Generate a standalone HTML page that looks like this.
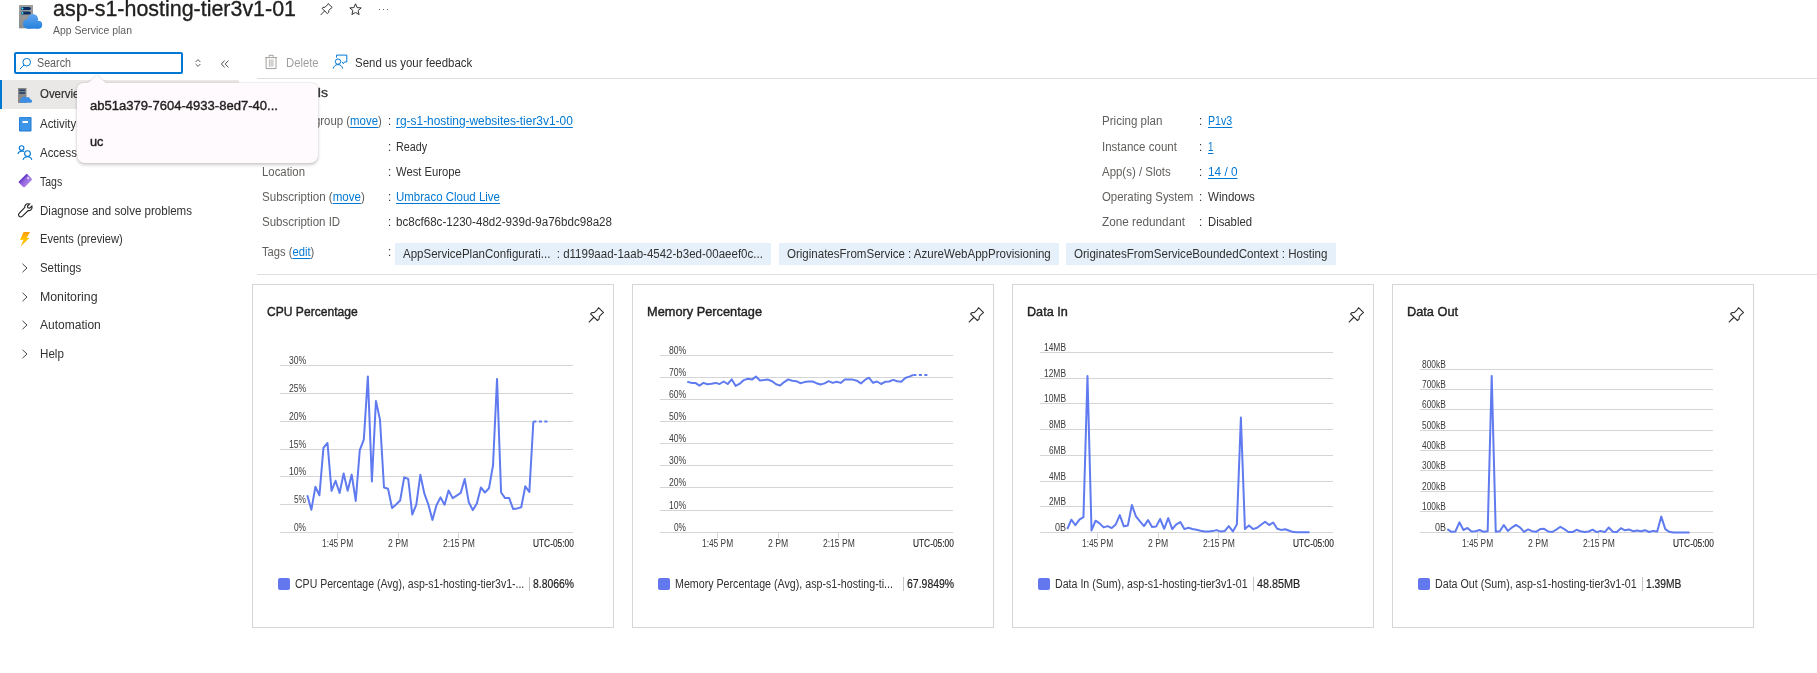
<!DOCTYPE html>
<html><head><meta charset="utf-8"><style>
html,body{margin:0;padding:0;background:#fff;}
body{width:1817px;height:673px;overflow:hidden;position:relative;font-family:"Liberation Sans", sans-serif;}
.t{position:absolute;white-space:nowrap;line-height:1;transform-origin:0 0;}
u{text-decoration:underline;text-underline-offset:2px;}
svg{overflow:visible}
</style></head><body>
<svg style="position:absolute;left:19px;top:5px" width="24" height="24" viewBox="0 0 24 24">
<defs><linearGradient id="sg" x1="0" y1="0" x2="0" y2="1"><stop offset="0" stop-color="#a0a0a0"/><stop offset="1" stop-color="#8c8c8c"/></linearGradient>
<linearGradient id="cg" gradientUnits="userSpaceOnUse" x1="0" y1="9" x2="0" y2="24"><stop offset="0" stop-color="#63a5f0"/><stop offset="1" stop-color="#2381dd"/></linearGradient></defs>
<rect x="0" y="0" width="14" height="23.3" fill="url(#sg)"/>
<rect x="1.8" y="1.9" width="10" height="3.1" rx="1.5" fill="#0b2d62"/><rect x="1.8" y="6.4" width="10" height="3.1" rx="1.5" fill="#0b2d62"/>
<circle cx="3.4" cy="3.45" r="1" fill="#50e6ff"/><circle cx="3.4" cy="7.95" r="1" fill="#50e6ff"/>
<g fill="url(#cg)"><circle cx="13.8" cy="14.3" r="5.3"/><circle cx="8.8" cy="18.9" r="4.8"/><circle cx="19.2" cy="19.7" r="4"/><rect x="8.8" y="16" width="10.4" height="7.7"/></g>
</svg>
<div class="t" style="left:53.00px;top:-2.00px;font-size:22px;color:#201f1e;font-weight:400;transform:scaleX(0.9741);-webkit-text-stroke:0.35px currentColor;">asp-s1-hosting-tier3v1-01</div>
<div class="t" style="left:53.00px;top:25.00px;font-size:11.5px;color:#605e5c;font-weight:400;transform:scaleX(0.9085);">App Service plan</div>
<svg style="position:absolute;left:320px;top:3px" width="12.5" height="12.5" viewBox="0 0 16 16" fill="none" stroke="#323130" stroke-width="1.25" stroke-linejoin="round">
<path d="M10.5 0.7 L15.6 5.6 L14.4 6.4 L11.4 9.4 L11.1 12.1 L9.4 13.5 L2.6 6.9 L3.8 5.6 L6.5 5.4 L9.6 2.3 Z"/><path d="M6.1 10 L0.8 15.3"/></svg>
<svg style="position:absolute;left:349px;top:3px" width="13" height="13" viewBox="0 0 13 13" fill="none" stroke="#323130" stroke-width="1">
<path d="M6.5 0.8 L8.1 4.6 L12.2 4.9 L9.1 7.5 L10.1 11.6 L6.5 9.4 L2.9 11.6 L3.9 7.5 L0.8 4.9 L4.9 4.6 Z"/></svg>
<div style="position:absolute;left:378.5px;top:9px;width:1.3px;height:1.3px;background:#323130;border-radius:1px"></div>
<div style="position:absolute;left:382.5px;top:9px;width:1.3px;height:1.3px;background:#323130;border-radius:1px"></div>
<div style="position:absolute;left:386.5px;top:9px;width:1.3px;height:1.3px;background:#323130;border-radius:1px"></div>
<div style="position:absolute;left:14px;top:52px;width:165px;height:18px;border:2px solid #0078d4;border-radius:2px"></div>
<svg style="position:absolute;left:19px;top:57px" width="13" height="13" viewBox="0 0 13 13" fill="none" stroke="#0078d4" stroke-width="1">
<circle cx="7.7" cy="5.2" r="3.8"/><path d="M5 8 L1 12"/></svg>
<div class="t" style="left:37.00px;top:57.00px;font-size:12.5px;color:#605e5c;font-weight:400;transform:scaleX(0.8584);">Search</div>
<svg style="position:absolute;left:194.5px;top:58.5px" width="6" height="8" viewBox="0 0 6 8" fill="none" stroke="#484644" stroke-width="0.9">
<path d="M0.6 3 L3 0.6 L5.4 3"/><path d="M0.6 5 L3 7.4 L5.4 5"/></svg>
<svg style="position:absolute;left:220.5px;top:59.5px" width="8" height="8" viewBox="0 0 8 8" fill="none" stroke="#484644" stroke-width="0.95">
<path d="M3.7 0.5 L0.4 4 L3.7 7.5"/><path d="M7.5 0.5 L4.2 4 L7.5 7.5"/></svg>
<div style="position:absolute;left:0px;top:80px;width:239px;height:29px;background:#e9e8e7;"></div>
<div style="position:absolute;left:0px;top:80px;width:2px;height:29px;background:#0078d4;"></div>
<div class="t" style="left:40.00px;top:88.00px;font-size:12.5px;color:#323130;font-weight:400;transform:scaleX(0.9152);-webkit-text-stroke:0.2px currentColor;">Overview</div>
<div class="t" style="left:40.00px;top:118.00px;font-size:12.5px;color:#323130;font-weight:400;transform:scaleX(0.9152);">Activity log</div>
<div class="t" style="left:40.00px;top:147.00px;font-size:12.5px;color:#323130;font-weight:400;transform:scaleX(0.9152);">Access control (IAM)</div>
<div class="t" style="left:40.00px;top:176.00px;font-size:12.5px;color:#323130;font-weight:400;transform:scaleX(0.8407);">Tags</div>
<div class="t" style="left:40.00px;top:205.00px;font-size:12.5px;color:#323130;font-weight:400;transform:scaleX(0.9230);">Diagnose and solve problems</div>
<div class="t" style="left:40.00px;top:233.00px;font-size:12.5px;color:#323130;font-weight:400;transform:scaleX(0.8873);">Events (preview)</div>
<div class="t" style="left:40.00px;top:262.00px;font-size:12.5px;color:#323130;font-weight:400;transform:scaleX(0.9121);">Settings</div>
<div class="t" style="left:40.00px;top:291.00px;font-size:12.5px;color:#323130;font-weight:400;transform:scaleX(0.9850);">Monitoring</div>
<div class="t" style="left:40.00px;top:319.00px;font-size:12.5px;color:#323130;font-weight:400;transform:scaleX(0.9615);">Automation</div>
<div class="t" style="left:40.00px;top:348.00px;font-size:12.5px;color:#323130;font-weight:400;transform:scaleX(0.9293);">Help</div>
<svg style="position:absolute;left:18px;top:88px" width="15" height="15" viewBox="0 0 15 15">
<rect x="0" y="0" width="8.5" height="15" fill="#8a8886"/><rect x="1.2" y="1.5" width="6" height="1.6" fill="#1b3e6b"/><rect x="1.2" y="4.2" width="6" height="1.6" fill="#1b3e6b"/>
<path d="M3.5 14.8 C1.2 14.8 1 11.2 3.3 11 C3.6 8.3 7 7.6 8.3 9.6 C9.6 8.3 12 9 12 11.2 C14.8 11.2 14.8 14.8 12.3 14.8 Z" fill="#3b8ee3"/></svg>
<svg style="position:absolute;left:19px;top:117px" width="13" height="15" viewBox="0 0 13 15">
<rect x="0" y="0" width="12.5" height="14.5" rx="1.2" fill="#1f7ad6"/><rect x="0.8" y="0.6" width="10.8" height="13" rx="1" fill="#3c95e6"/><rect x="3.5" y="4" width="5.5" height="2" fill="#fff"/></svg>
<svg style="position:absolute;left:17px;top:145px" width="16" height="16" viewBox="0 0 16 16" fill="none" stroke="#0078d4" stroke-width="1.1">
<circle cx="4.6" cy="3.1" r="2.3"/><path d="M0.9 8.8 C1.4 7.2 2.8 6.1 5.0 6.0 C5.8 6.0 6.4 6.2 7 6.5"/><circle cx="10.5" cy="8.6" r="2.9"/><path d="M6 14.8 C6.6 12.7 8.4 11.7 10.5 11.7 C12.6 11.7 14.4 12.7 14.8 14.8"/></svg>
<svg style="position:absolute;left:0;top:0" width="40" height="200" viewBox="0 0 40 200">
<defs><linearGradient id="tg" x1="0" y1="0" x2="0.3" y2="1"><stop offset="0" stop-color="#7a48d8"/><stop offset="1" stop-color="#a982e6"/></linearGradient></defs>
<g transform="translate(25.4 180.8) rotate(-45)"><rect x="-6" y="-4" width="12" height="8" rx="1.2" fill="url(#tg)"/><rect x="-6" y="-4" width="12" height="1.6" rx="0.8" fill="#6a3fc9"/><circle cx="3.8" cy="0" r="1" fill="#fff" opacity="0.85"/></g></svg>
<svg style="position:absolute;left:17.5px;top:202.5px" width="15" height="15" viewBox="0 0 16 16" fill="none" stroke="#201f1e" stroke-width="1.2">
<path d="M10.5 0.8 C8.5 0.8 7 2.5 7.3 4.6 L1.2 11 C0.3 11.9 0.4 13.3 1.3 14.2 C2.2 15.1 3.6 15.1 4.5 14.2 L10.8 8 C13 8.4 15 6.8 15 4.6 C15 4.1 14.9 3.7 14.8 3.3 L12.5 5.5 L10.5 5.2 L10.2 3.2 L12.5 1 C11.9 0.9 11.2 0.8 10.5 0.8 Z"/></svg>
<svg style="position:absolute;left:20px;top:231.5px" width="11" height="15" viewBox="0 0 11 15">
<defs><linearGradient id="lg" x1="0" y1="0" x2="0" y2="1"><stop offset="0" stop-color="#ff9a00"/><stop offset="0.5" stop-color="#ffc400"/><stop offset="1" stop-color="#ffb000"/></linearGradient></defs>
<path d="M3.6 0 L10 0 L6.6 6 L9.6 5.8 L0.6 14.6 L3.6 7.8 L0 8 Z" fill="url(#lg)"/></svg>
<svg style="position:absolute;left:21px;top:263px" width="8" height="10" viewBox="0 0 8 10" fill="none" stroke="#323130" stroke-width="0.9">
<path d="M1.5 0.8 L6 5 L1.5 9.2"/></svg>
<svg style="position:absolute;left:21px;top:292px" width="8" height="10" viewBox="0 0 8 10" fill="none" stroke="#323130" stroke-width="0.9">
<path d="M1.5 0.8 L6 5 L1.5 9.2"/></svg>
<svg style="position:absolute;left:21px;top:320px" width="8" height="10" viewBox="0 0 8 10" fill="none" stroke="#323130" stroke-width="0.9">
<path d="M1.5 0.8 L6 5 L1.5 9.2"/></svg>
<svg style="position:absolute;left:21px;top:349px" width="8" height="10" viewBox="0 0 8 10" fill="none" stroke="#323130" stroke-width="0.9">
<path d="M1.5 0.8 L6 5 L1.5 9.2"/></svg>
<svg style="position:absolute;left:265px;top:54px" width="12" height="15" viewBox="0 0 12 15" fill="none" stroke="#a19f9d" stroke-width="1">
<path d="M4.1 2.8 L4.1 1.3 L8.2 1.3 L8.2 2.8"/><path d="M0.2 3.6 L12 3.6"/><path d="M1.1 3.6 L1.1 14.6 L11 14.6 L11 3.6"/><path d="M4.4 5.4 V12.7 M6.15 5.4 V12.7 M7.9 5.4 V12.7" stroke-width="0.8"/></svg>
<div class="t" style="left:286.00px;top:57.00px;font-size:12.5px;color:#a19f9d;font-weight:400;transform:scaleX(0.9020);">Delete</div>
<svg style="position:absolute;left:332px;top:54px" width="16" height="16" viewBox="0 0 16 16" fill="none" stroke="#0078d4" stroke-width="1">
<path d="M4.5 3.6 L4.5 1.1 L14.8 1.1 L14.8 7.9 L12.6 7.9 L11.3 9.7 L10.3 7.9"/><circle cx="6" cy="7.6" r="2.7"/><path d="M1.2 14.6 C1.8 11.8 3.8 10.6 6 10.6 C8.2 10.6 10.2 11.8 10.6 14.6"/></svg>
<div class="t" style="left:354.50px;top:57.00px;font-size:12.5px;color:#323130;font-weight:400;transform:scaleX(0.9173);">Send us your feedback</div>
<div style="position:absolute;left:257px;top:78px;width:1560px;height:1px;background:#e1dfdd;"></div>
<div class="t" style="left:264.00px;top:87.00px;font-size:12.5px;color:#323130;font-weight:400;transform:scaleX(1.1231);-webkit-text-stroke:0.3px currentColor;">Essentials</div>
<div class="t" style="left:261.50px;top:115.00px;font-size:12.5px;color:#605e5c;font-weight:400;transform:scaleX(0.9122);">Resource group (<u style="color:#0078d4">move</u>)</div>
<div class="t" style="left:388.00px;top:115.00px;font-size:12.5px;color:#323130;font-weight:400;transform:scaleX(0.9152);">:</div>
<div class="t" style="left:396.00px;top:115.00px;font-size:12.5px;color:#0078d4;font-weight:400;transform:scaleX(0.9531);"><u>rg-s1-hosting-websites-tier3v1-00</u></div>
<div class="t" style="left:261.50px;top:141.00px;font-size:12.5px;color:#605e5c;font-weight:400;transform:scaleX(0.9152);">Status</div>
<div class="t" style="left:388.00px;top:141.00px;font-size:12.5px;color:#323130;font-weight:400;transform:scaleX(0.9152);">:</div>
<div class="t" style="left:396.00px;top:141.00px;font-size:12.5px;color:#323130;font-weight:400;transform:scaleX(0.8633);">Ready</div>
<div class="t" style="left:261.50px;top:166.00px;font-size:12.5px;color:#605e5c;font-weight:400;transform:scaleX(0.9098);">Location</div>
<div class="t" style="left:388.00px;top:166.00px;font-size:12.5px;color:#323130;font-weight:400;transform:scaleX(0.9152);">:</div>
<div class="t" style="left:396.00px;top:166.00px;font-size:12.5px;color:#323130;font-weight:400;transform:scaleX(0.8996);">West Europe</div>
<div class="t" style="left:261.50px;top:191.00px;font-size:12.5px;color:#605e5c;font-weight:400;transform:scaleX(0.9246);">Subscription (<u style="color:#0078d4">move</u>)</div>
<div class="t" style="left:388.00px;top:191.00px;font-size:12.5px;color:#323130;font-weight:400;transform:scaleX(0.9152);">:</div>
<div class="t" style="left:396.00px;top:191.00px;font-size:12.5px;color:#0078d4;font-weight:400;transform:scaleX(0.9183);"><u>Umbraco Cloud Live</u></div>
<div class="t" style="left:261.50px;top:216.00px;font-size:12.5px;color:#605e5c;font-weight:400;transform:scaleX(0.9225);">Subscription ID</div>
<div class="t" style="left:388.00px;top:216.00px;font-size:12.5px;color:#323130;font-weight:400;transform:scaleX(0.9152);">:</div>
<div class="t" style="left:396.00px;top:216.00px;font-size:12.5px;color:#323130;font-weight:400;transform:scaleX(0.9277);">bc8cf68c-1230-48d2-939d-9a76bdc98a28</div>
<div class="t" style="left:1102.00px;top:115.00px;font-size:12.5px;color:#605e5c;font-weight:400;transform:scaleX(0.9246);">Pricing plan</div>
<div class="t" style="left:1199.00px;top:115.00px;font-size:12.5px;color:#323130;font-weight:400;transform:scaleX(0.9152);">:</div>
<div class="t" style="left:1208.00px;top:115.00px;font-size:12.5px;color:#0078d4;font-weight:400;transform:scaleX(0.8526);"><u>P1v3</u></div>
<div class="t" style="left:1102.00px;top:141.00px;font-size:12.5px;color:#605e5c;font-weight:400;transform:scaleX(0.9211);">Instance count</div>
<div class="t" style="left:1199.00px;top:141.00px;font-size:12.5px;color:#323130;font-weight:400;transform:scaleX(0.9152);">:</div>
<div class="t" style="left:1208.00px;top:141.00px;font-size:12.5px;color:#0078d4;font-weight:400;transform:scaleX(0.7766);"><u>1</u></div>
<div class="t" style="left:1102.00px;top:166.00px;font-size:12.5px;color:#605e5c;font-weight:400;transform:scaleX(0.9156);">App(s) / Slots</div>
<div class="t" style="left:1199.00px;top:166.00px;font-size:12.5px;color:#323130;font-weight:400;transform:scaleX(0.9152);">:</div>
<div class="t" style="left:1208.00px;top:166.00px;font-size:12.5px;color:#0078d4;font-weight:400;transform:scaleX(0.9431);"><u>14 / 0</u></div>
<div class="t" style="left:1102.00px;top:191.00px;font-size:12.5px;color:#605e5c;font-weight:400;transform:scaleX(0.9126);">Operating System</div>
<div class="t" style="left:1199.00px;top:191.00px;font-size:12.5px;color:#323130;font-weight:400;transform:scaleX(0.9152);">:</div>
<div class="t" style="left:1208.00px;top:191.00px;font-size:12.5px;color:#323130;font-weight:400;transform:scaleX(0.9247);">Windows</div>
<div class="t" style="left:1102.00px;top:216.00px;font-size:12.5px;color:#605e5c;font-weight:400;transform:scaleX(0.9403);">Zone redundant</div>
<div class="t" style="left:1199.00px;top:216.00px;font-size:12.5px;color:#323130;font-weight:400;transform:scaleX(0.9152);">:</div>
<div class="t" style="left:1208.00px;top:216.00px;font-size:12.5px;color:#323130;font-weight:400;transform:scaleX(0.9046);">Disabled</div>
<div class="t" style="left:261.50px;top:246.00px;font-size:12.5px;color:#605e5c;font-weight:400;transform:scaleX(0.8959);">Tags (<u style="color:#0078d4">edit</u>)</div>
<div class="t" style="left:388.00px;top:246.00px;font-size:12.5px;color:#323130;font-weight:400;transform:scaleX(0.9152);">:</div>
<div style="position:absolute;left:395px;top:243px;width:376px;height:22px;background:#e5f0fa;"></div>
<div class="t" style="left:403.00px;top:248.00px;font-size:12.5px;color:#323130;font-weight:400;transform:scaleX(0.9220);">AppServicePlanConfigurati...&nbsp; : d1199aad-1aab-4542-b3ed-00aeef0c...</div>
<div style="position:absolute;left:779px;top:243px;width:280px;height:22px;background:#e5f0fa;"></div>
<div class="t" style="left:787.00px;top:248.00px;font-size:12.5px;color:#323130;font-weight:400;transform:scaleX(0.9223);">OriginatesFromService : AzureWebAppProvisioning</div>
<div style="position:absolute;left:1066px;top:243px;width:270px;height:22px;background:#e5f0fa;"></div>
<div class="t" style="left:1074.00px;top:248.00px;font-size:12.5px;color:#323130;font-weight:400;transform:scaleX(0.9257);">OriginatesFromServiceBoundedContext : Hosting</div>
<div style="position:absolute;left:257px;top:274px;width:1560px;height:1px;background:#e1dfdd;"></div>
<div style="position:absolute;left:252px;top:284px;width:360px;height:342px;border:1px solid #d6d6d6"></div>
<div class="t" style="left:267.10px;top:306.00px;font-size:12.5px;color:#201f1e;font-weight:400;transform:scaleX(0.9668);-webkit-text-stroke:0.4px currentColor;">CPU Percentage</div>
<svg style="position:absolute;left:588px;top:307px" width="16" height="16" viewBox="0 0 16 16" fill="none" stroke="#323130" stroke-width="1.1" stroke-linejoin="round">
<path d="M10.5 0.7 L15.6 5.6 L14.4 6.4 L11.4 9.4 L11.1 12.1 L9.4 13.5 L2.6 6.9 L3.8 5.6 L6.5 5.4 L9.6 2.3 Z"/><path d="M6.1 10 L0.8 15.3"/></svg>
<div style="position:absolute;left:280px;top:365px;width:293px;height:1px;background:#d5d5d5;"></div>
<div style="position:absolute;left:280px;top:393px;width:293px;height:1px;background:#d5d5d5;"></div>
<div style="position:absolute;left:280px;top:421px;width:293px;height:1px;background:#d5d5d5;"></div>
<div style="position:absolute;left:280px;top:449px;width:293px;height:1px;background:#d5d5d5;"></div>
<div style="position:absolute;left:280px;top:476px;width:293px;height:1px;background:#d5d5d5;"></div>
<div style="position:absolute;left:280px;top:504px;width:293px;height:1px;background:#d5d5d5;"></div>
<div style="position:absolute;left:280px;top:532px;width:293px;height:1px;background:#d5d5d5;"></div>
<div class="t" style="left:288.80px;top:356.00px;font-size:10px;color:#3b3a39;font-weight:400;transform:scaleX(0.8593);">30%</div>
<div class="t" style="left:288.80px;top:384.00px;font-size:10px;color:#3b3a39;font-weight:400;transform:scaleX(0.8593);">25%</div>
<div class="t" style="left:288.80px;top:412.00px;font-size:10px;color:#3b3a39;font-weight:400;transform:scaleX(0.8593);">20%</div>
<div class="t" style="left:288.80px;top:440.00px;font-size:10px;color:#3b3a39;font-weight:400;transform:scaleX(0.8593);">15%</div>
<div class="t" style="left:288.80px;top:467.00px;font-size:10px;color:#3b3a39;font-weight:400;transform:scaleX(0.8593);">10%</div>
<div class="t" style="left:294.00px;top:495.00px;font-size:10px;color:#3b3a39;font-weight:400;transform:scaleX(0.8303);">5%</div>
<div class="t" style="left:294.00px;top:523.00px;font-size:10px;color:#3b3a39;font-weight:400;transform:scaleX(0.8303);">0%</div>
<div style="position:absolute;left:337px;top:533px;width:1px;height:5px;background:#d5d5d5;"></div>
<div style="position:absolute;left:398px;top:533px;width:1px;height:5px;background:#d5d5d5;"></div>
<div style="position:absolute;left:458px;top:533px;width:1px;height:5px;background:#d5d5d5;"></div>
<div class="t" style="left:321.95px;top:539.00px;font-size:10px;color:#3b3a39;font-weight:400;transform:scaleX(0.8349);">1:45 PM</div>
<div class="t" style="left:387.95px;top:539.00px;font-size:10px;color:#3b3a39;font-weight:400;transform:scaleX(0.8610);">2 PM</div>
<div class="t" style="left:442.60px;top:539.00px;font-size:10px;color:#3b3a39;font-weight:400;transform:scaleX(0.8537);">2:15 PM</div>
<div class="t" style="left:532.70px;top:539.00px;font-size:10px;color:#201f1e;font-weight:400;transform:scaleX(0.8342);-webkit-text-stroke:0.15px currentColor;">UTC-05:00</div>
<svg style="position:absolute;left:0;top:0" width="1817" height="673"><polyline points="307.30,495.30 311.34,509.80 315.37,486.80 319.41,495.30 323.45,447.90 327.49,443.00 331.52,490.80 335.56,480.80 339.60,493.00 343.63,473.50 347.67,490.80 351.71,474.60 355.74,500.90 359.78,450.10 363.82,439.60 367.86,376.40 371.89,481.50 375.93,401.00 379.97,419.60 384.00,487.50 388.04,488.70 392.08,508.00 396.11,504.50 400.15,500.50 404.19,477.30 408.23,479.00 412.26,514.50 416.30,504.70 420.34,474.80 424.37,493.70 428.41,504.70 432.45,519.90 436.48,505.20 440.52,497.40 444.56,504.70 448.60,490.50 452.63,498.10 456.67,495.60 460.71,492.90 464.74,479.00 468.78,502.30 472.82,510.10 476.85,503.50 480.89,487.50 484.93,492.50 488.97,488.30 493.00,465.50 497.04,378.90 501.08,492.50 505.11,498.10 509.15,498.10 513.19,509.10 517.22,508.40 521.26,507.20 525.30,486.30 529.34,492.00 533.37,421.50" fill="none" stroke="#5f7bef" stroke-width="2" stroke-linejoin="round" stroke-linecap="butt"/>
<path d="M533.37 421.5 L547.50 421.5" stroke="#5f7bef" stroke-width="2" stroke-dasharray="3 2.5" fill="none"/>
</svg>
<div style="position:absolute;left:278px;top:578px;width:12px;height:12px;background:#6378ee;border-radius:2px"></div>
<div class="t" style="left:295.00px;top:578.00px;font-size:12px;color:#323130;font-weight:400;transform:scaleX(0.8778);">CPU Percentage (Avg), asp-s1-hosting-tier3v1-...</div>
<div style="position:absolute;left:529px;top:577px;width:1px;height:14px;background:#c8c6c4;"></div>
<div class="t" style="left:533.00px;top:578.00px;font-size:12.5px;color:#201f1e;font-weight:400;transform:scaleX(0.8306);-webkit-text-stroke:0.2px currentColor;">8.8066%</div>
<div style="position:absolute;left:632px;top:284px;width:360px;height:342px;border:1px solid #d6d6d6"></div>
<div class="t" style="left:647.10px;top:306.00px;font-size:12.5px;color:#201f1e;font-weight:400;transform:scaleX(1.0217);-webkit-text-stroke:0.4px currentColor;">Memory Percentage</div>
<svg style="position:absolute;left:968px;top:307px" width="16" height="16" viewBox="0 0 16 16" fill="none" stroke="#323130" stroke-width="1.1" stroke-linejoin="round">
<path d="M10.5 0.7 L15.6 5.6 L14.4 6.4 L11.4 9.4 L11.1 12.1 L9.4 13.5 L2.6 6.9 L3.8 5.6 L6.5 5.4 L9.6 2.3 Z"/><path d="M6.1 10 L0.8 15.3"/></svg>
<div style="position:absolute;left:660px;top:355px;width:293px;height:1px;background:#d5d5d5;"></div>
<div style="position:absolute;left:660px;top:377px;width:293px;height:1px;background:#d5d5d5;"></div>
<div style="position:absolute;left:660px;top:399px;width:293px;height:1px;background:#d5d5d5;"></div>
<div style="position:absolute;left:660px;top:421px;width:293px;height:1px;background:#d5d5d5;"></div>
<div style="position:absolute;left:660px;top:443px;width:293px;height:1px;background:#d5d5d5;"></div>
<div style="position:absolute;left:660px;top:465px;width:293px;height:1px;background:#d5d5d5;"></div>
<div style="position:absolute;left:660px;top:487px;width:293px;height:1px;background:#d5d5d5;"></div>
<div style="position:absolute;left:660px;top:510px;width:293px;height:1px;background:#d5d5d5;"></div>
<div style="position:absolute;left:660px;top:532px;width:293px;height:1px;background:#d5d5d5;"></div>
<div class="t" style="left:668.80px;top:346.00px;font-size:10px;color:#3b3a39;font-weight:400;transform:scaleX(0.8593);">80%</div>
<div class="t" style="left:668.80px;top:368.00px;font-size:10px;color:#3b3a39;font-weight:400;transform:scaleX(0.8593);">70%</div>
<div class="t" style="left:668.80px;top:390.00px;font-size:10px;color:#3b3a39;font-weight:400;transform:scaleX(0.8593);">60%</div>
<div class="t" style="left:668.80px;top:412.00px;font-size:10px;color:#3b3a39;font-weight:400;transform:scaleX(0.8593);">50%</div>
<div class="t" style="left:668.80px;top:434.00px;font-size:10px;color:#3b3a39;font-weight:400;transform:scaleX(0.8593);">40%</div>
<div class="t" style="left:668.80px;top:456.00px;font-size:10px;color:#3b3a39;font-weight:400;transform:scaleX(0.8593);">30%</div>
<div class="t" style="left:668.80px;top:478.00px;font-size:10px;color:#3b3a39;font-weight:400;transform:scaleX(0.8593);">20%</div>
<div class="t" style="left:668.80px;top:501.00px;font-size:10px;color:#3b3a39;font-weight:400;transform:scaleX(0.8593);">10%</div>
<div class="t" style="left:674.00px;top:523.00px;font-size:10px;color:#3b3a39;font-weight:400;transform:scaleX(0.8303);">0%</div>
<div style="position:absolute;left:717px;top:533px;width:1px;height:5px;background:#d5d5d5;"></div>
<div style="position:absolute;left:778px;top:533px;width:1px;height:5px;background:#d5d5d5;"></div>
<div style="position:absolute;left:838px;top:533px;width:1px;height:5px;background:#d5d5d5;"></div>
<div class="t" style="left:701.95px;top:539.00px;font-size:10px;color:#3b3a39;font-weight:400;transform:scaleX(0.8349);">1:45 PM</div>
<div class="t" style="left:767.95px;top:539.00px;font-size:10px;color:#3b3a39;font-weight:400;transform:scaleX(0.8610);">2 PM</div>
<div class="t" style="left:822.60px;top:539.00px;font-size:10px;color:#3b3a39;font-weight:400;transform:scaleX(0.8537);">2:15 PM</div>
<div class="t" style="left:912.70px;top:539.00px;font-size:10px;color:#201f1e;font-weight:400;transform:scaleX(0.8342);-webkit-text-stroke:0.15px currentColor;">UTC-05:00</div>
<svg style="position:absolute;left:0;top:0" width="1817" height="673"><polyline points="687.30,381.80 691.34,382.90 695.37,382.90 699.41,385.60 703.45,382.90 707.48,384.30 711.52,383.70 715.56,382.90 719.60,384.00 723.63,381.50 727.67,384.00 731.71,379.30 735.74,385.90 739.78,383.70 743.82,380.10 747.85,378.80 751.89,379.60 755.93,376.60 759.97,380.40 764.00,380.10 768.04,379.60 772.08,381.20 776.11,384.30 780.15,385.60 784.19,382.10 788.22,379.40 792.26,380.70 796.30,381.20 800.34,383.20 804.37,382.10 808.41,381.50 812.45,381.50 816.48,383.20 820.52,384.50 824.56,383.40 828.59,381.20 832.63,382.90 836.67,381.80 840.71,382.90 844.74,379.60 848.78,379.60 852.82,379.60 856.85,380.70 860.89,383.40 864.93,379.90 868.96,377.70 873.00,382.80 877.04,381.50 881.08,384.00 885.11,381.80 889.15,381.50 893.19,379.90 897.22,381.30 901.26,381.80 905.30,378.00 909.33,376.60 913.37,374.90" fill="none" stroke="#5f7bef" stroke-width="2" stroke-linejoin="round" stroke-linecap="butt"/>
<path d="M913.37 374.9 L927.50 374.9" stroke="#5f7bef" stroke-width="2" stroke-dasharray="3 2.5" fill="none"/>
</svg>
<div style="position:absolute;left:658px;top:578px;width:12px;height:12px;background:#6378ee;border-radius:2px"></div>
<div class="t" style="left:675.00px;top:578.00px;font-size:12px;color:#323130;font-weight:400;transform:scaleX(0.8890);">Memory Percentage (Avg), asp-s1-hosting-ti...</div>
<div style="position:absolute;left:903px;top:577px;width:1px;height:14px;background:#c8c6c4;"></div>
<div class="t" style="left:907.00px;top:578.00px;font-size:12.5px;color:#201f1e;font-weight:400;transform:scaleX(0.8382);-webkit-text-stroke:0.2px currentColor;">67.9849%</div>
<div style="position:absolute;left:1012px;top:284px;width:360px;height:342px;border:1px solid #d6d6d6"></div>
<div class="t" style="left:1027.10px;top:306.00px;font-size:12.5px;color:#201f1e;font-weight:400;transform:scaleX(1.0096);-webkit-text-stroke:0.4px currentColor;">Data In</div>
<svg style="position:absolute;left:1348px;top:307px" width="16" height="16" viewBox="0 0 16 16" fill="none" stroke="#323130" stroke-width="1.1" stroke-linejoin="round">
<path d="M10.5 0.7 L15.6 5.6 L14.4 6.4 L11.4 9.4 L11.1 12.1 L9.4 13.5 L2.6 6.9 L3.8 5.6 L6.5 5.4 L9.6 2.3 Z"/><path d="M6.1 10 L0.8 15.3"/></svg>
<div style="position:absolute;left:1040px;top:352px;width:293px;height:1px;background:#d5d5d5;"></div>
<div style="position:absolute;left:1040px;top:378px;width:293px;height:1px;background:#d5d5d5;"></div>
<div style="position:absolute;left:1040px;top:403px;width:293px;height:1px;background:#d5d5d5;"></div>
<div style="position:absolute;left:1040px;top:429px;width:293px;height:1px;background:#d5d5d5;"></div>
<div style="position:absolute;left:1040px;top:455px;width:293px;height:1px;background:#d5d5d5;"></div>
<div style="position:absolute;left:1040px;top:481px;width:293px;height:1px;background:#d5d5d5;"></div>
<div style="position:absolute;left:1040px;top:506px;width:293px;height:1px;background:#d5d5d5;"></div>
<div style="position:absolute;left:1040px;top:532px;width:293px;height:1px;background:#d5d5d5;"></div>
<div class="t" style="left:1044.00px;top:343.00px;font-size:10px;color:#3b3a39;font-weight:400;transform:scaleX(0.8421);">14MB</div>
<div class="t" style="left:1044.00px;top:369.00px;font-size:10px;color:#3b3a39;font-weight:400;transform:scaleX(0.8421);">12MB</div>
<div class="t" style="left:1044.00px;top:394.00px;font-size:10px;color:#3b3a39;font-weight:400;transform:scaleX(0.8421);">10MB</div>
<div class="t" style="left:1049.00px;top:420.00px;font-size:10px;color:#3b3a39;font-weight:400;transform:scaleX(0.8267);">8MB</div>
<div class="t" style="left:1049.00px;top:446.00px;font-size:10px;color:#3b3a39;font-weight:400;transform:scaleX(0.8267);">6MB</div>
<div class="t" style="left:1049.00px;top:472.00px;font-size:10px;color:#3b3a39;font-weight:400;transform:scaleX(0.8267);">4MB</div>
<div class="t" style="left:1049.00px;top:497.00px;font-size:10px;color:#3b3a39;font-weight:400;transform:scaleX(0.8267);">2MB</div>
<div class="t" style="left:1055.00px;top:523.00px;font-size:10px;color:#3b3a39;font-weight:400;transform:scaleX(0.8991);">0B</div>
<div style="position:absolute;left:1097px;top:533px;width:1px;height:5px;background:#d5d5d5;"></div>
<div style="position:absolute;left:1158px;top:533px;width:1px;height:5px;background:#d5d5d5;"></div>
<div style="position:absolute;left:1218px;top:533px;width:1px;height:5px;background:#d5d5d5;"></div>
<div class="t" style="left:1081.95px;top:539.00px;font-size:10px;color:#3b3a39;font-weight:400;transform:scaleX(0.8349);">1:45 PM</div>
<div class="t" style="left:1147.95px;top:539.00px;font-size:10px;color:#3b3a39;font-weight:400;transform:scaleX(0.8610);">2 PM</div>
<div class="t" style="left:1202.60px;top:539.00px;font-size:10px;color:#3b3a39;font-weight:400;transform:scaleX(0.8537);">2:15 PM</div>
<div class="t" style="left:1292.70px;top:539.00px;font-size:10px;color:#201f1e;font-weight:400;transform:scaleX(0.8342);-webkit-text-stroke:0.15px currentColor;">UTC-05:00</div>
<svg style="position:absolute;left:0;top:0" width="1817" height="673"><polyline points="1067.30,529.00 1071.34,519.70 1075.37,525.10 1079.41,519.70 1083.45,517.10 1087.48,376.00 1091.52,530.40 1095.56,520.70 1099.60,523.40 1103.63,527.40 1107.67,526.10 1111.71,528.10 1115.74,524.40 1119.78,515.10 1123.82,526.30 1127.86,525.40 1131.89,505.00 1135.93,516.40 1139.97,521.40 1144.00,526.10 1148.04,520.10 1152.08,527.10 1156.11,526.60 1160.15,519.00 1164.19,528.80 1168.22,518.10 1172.26,529.10 1176.30,524.40 1180.34,522.10 1184.37,529.10 1188.41,527.80 1192.45,529.00 1196.48,529.80 1200.52,530.80 1204.56,531.40 1208.60,531.40 1212.63,531.10 1216.67,530.10 1220.71,531.60 1224.74,531.10 1228.78,526.10 1232.82,531.40 1236.85,524.40 1240.89,417.50 1244.93,529.10 1248.96,525.40 1253.00,529.10 1257.04,527.80 1261.08,524.70 1265.11,521.70 1269.15,525.10 1273.19,522.50 1277.22,528.80 1281.26,529.90 1285.30,529.20 1289.34,530.80 1293.37,532.10 1297.41,532.30 1301.45,532.30 1305.48,532.30 1309.52,532.30" fill="none" stroke="#5f7bef" stroke-width="2" stroke-linejoin="round" stroke-linecap="butt"/>
</svg>
<div style="position:absolute;left:1038px;top:578px;width:12px;height:12px;background:#6378ee;border-radius:2px"></div>
<div class="t" style="left:1055.00px;top:578.00px;font-size:12px;color:#323130;font-weight:400;transform:scaleX(0.8858);">Data In (Sum), asp-s1-hosting-tier3v1-01</div>
<div style="position:absolute;left:1253px;top:577px;width:1px;height:14px;background:#c8c6c4;"></div>
<div class="t" style="left:1257.00px;top:578.00px;font-size:12.5px;color:#201f1e;font-weight:400;transform:scaleX(0.8655);-webkit-text-stroke:0.2px currentColor;">48.85MB</div>
<div style="position:absolute;left:1392px;top:284px;width:360px;height:342px;border:1px solid #d6d6d6"></div>
<div class="t" style="left:1407.10px;top:306.00px;font-size:12.5px;color:#201f1e;font-weight:400;transform:scaleX(1.0214);-webkit-text-stroke:0.4px currentColor;">Data Out</div>
<svg style="position:absolute;left:1728px;top:307px" width="16" height="16" viewBox="0 0 16 16" fill="none" stroke="#323130" stroke-width="1.1" stroke-linejoin="round">
<path d="M10.5 0.7 L15.6 5.6 L14.4 6.4 L11.4 9.4 L11.1 12.1 L9.4 13.5 L2.6 6.9 L3.8 5.6 L6.5 5.4 L9.6 2.3 Z"/><path d="M6.1 10 L0.8 15.3"/></svg>
<div style="position:absolute;left:1420px;top:369px;width:293px;height:1px;background:#d5d5d5;"></div>
<div style="position:absolute;left:1420px;top:389px;width:293px;height:1px;background:#d5d5d5;"></div>
<div style="position:absolute;left:1420px;top:409px;width:293px;height:1px;background:#d5d5d5;"></div>
<div style="position:absolute;left:1420px;top:430px;width:293px;height:1px;background:#d5d5d5;"></div>
<div style="position:absolute;left:1420px;top:450px;width:293px;height:1px;background:#d5d5d5;"></div>
<div style="position:absolute;left:1420px;top:470px;width:293px;height:1px;background:#d5d5d5;"></div>
<div style="position:absolute;left:1420px;top:491px;width:293px;height:1px;background:#d5d5d5;"></div>
<div style="position:absolute;left:1420px;top:511px;width:293px;height:1px;background:#d5d5d5;"></div>
<div style="position:absolute;left:1420px;top:532px;width:293px;height:1px;background:#d5d5d5;"></div>
<div class="t" style="left:1422.20px;top:360.00px;font-size:10px;color:#3b3a39;font-weight:400;transform:scaleX(0.8392);">800kB</div>
<div class="t" style="left:1422.20px;top:380.00px;font-size:10px;color:#3b3a39;font-weight:400;transform:scaleX(0.8392);">700kB</div>
<div class="t" style="left:1422.20px;top:400.00px;font-size:10px;color:#3b3a39;font-weight:400;transform:scaleX(0.8392);">600kB</div>
<div class="t" style="left:1422.20px;top:421.00px;font-size:10px;color:#3b3a39;font-weight:400;transform:scaleX(0.8392);">500kB</div>
<div class="t" style="left:1422.20px;top:441.00px;font-size:10px;color:#3b3a39;font-weight:400;transform:scaleX(0.8392);">400kB</div>
<div class="t" style="left:1422.20px;top:461.00px;font-size:10px;color:#3b3a39;font-weight:400;transform:scaleX(0.8392);">300kB</div>
<div class="t" style="left:1422.20px;top:482.00px;font-size:10px;color:#3b3a39;font-weight:400;transform:scaleX(0.8392);">200kB</div>
<div class="t" style="left:1422.20px;top:502.00px;font-size:10px;color:#3b3a39;font-weight:400;transform:scaleX(0.8392);">100kB</div>
<div class="t" style="left:1435.00px;top:523.00px;font-size:10px;color:#3b3a39;font-weight:400;transform:scaleX(0.8991);">0B</div>
<div style="position:absolute;left:1477px;top:533px;width:1px;height:5px;background:#d5d5d5;"></div>
<div style="position:absolute;left:1538px;top:533px;width:1px;height:5px;background:#d5d5d5;"></div>
<div style="position:absolute;left:1598px;top:533px;width:1px;height:5px;background:#d5d5d5;"></div>
<div class="t" style="left:1461.95px;top:539.00px;font-size:10px;color:#3b3a39;font-weight:400;transform:scaleX(0.8349);">1:45 PM</div>
<div class="t" style="left:1527.95px;top:539.00px;font-size:10px;color:#3b3a39;font-weight:400;transform:scaleX(0.8610);">2 PM</div>
<div class="t" style="left:1582.60px;top:539.00px;font-size:10px;color:#3b3a39;font-weight:400;transform:scaleX(0.8537);">2:15 PM</div>
<div class="t" style="left:1672.70px;top:539.00px;font-size:10px;color:#201f1e;font-weight:400;transform:scaleX(0.8342);-webkit-text-stroke:0.15px currentColor;">UTC-05:00</div>
<svg style="position:absolute;left:0;top:0" width="1817" height="673"><polyline points="1447.30,529.10 1451.34,531.80 1455.37,531.50 1459.41,522.30 1463.45,530.00 1467.48,527.90 1471.52,531.50 1475.56,531.20 1479.60,530.00 1483.63,531.80 1487.67,531.20 1491.71,376.00 1495.74,531.80 1499.78,531.20 1503.82,525.00 1507.86,530.90 1511.89,527.60 1515.93,524.90 1519.97,527.30 1524.00,531.80 1528.04,529.40 1532.08,531.20 1536.11,531.80 1540.15,529.10 1544.19,528.80 1548.22,531.50 1552.26,532.00 1556.30,529.60 1560.34,526.80 1564.37,529.10 1568.41,532.00 1572.45,532.10 1576.48,529.80 1580.52,531.20 1584.56,532.10 1588.60,531.50 1592.63,529.70 1596.67,532.10 1600.71,530.90 1604.74,532.10 1608.78,527.50 1612.82,531.80 1616.85,532.00 1620.89,528.20 1624.93,530.30 1628.96,529.50 1633.00,531.20 1637.04,530.60 1641.08,531.20 1645.11,530.20 1649.15,532.00 1653.19,530.90 1657.22,531.50 1661.26,516.60 1665.30,529.10 1669.34,531.80 1673.37,532.40 1677.41,532.40 1681.45,532.40 1685.48,532.40 1689.52,532.40" fill="none" stroke="#5f7bef" stroke-width="2" stroke-linejoin="round" stroke-linecap="butt"/>
</svg>
<div style="position:absolute;left:1418px;top:578px;width:12px;height:12px;background:#6378ee;border-radius:2px"></div>
<div class="t" style="left:1435.00px;top:578.00px;font-size:12px;color:#323130;font-weight:400;transform:scaleX(0.8890);">Data Out (Sum), asp-s1-hosting-tier3v1-01</div>
<div style="position:absolute;left:1642px;top:577px;width:1px;height:14px;background:#c8c6c4;"></div>
<div class="t" style="left:1646.00px;top:578.00px;font-size:12.5px;color:#201f1e;font-weight:400;transform:scaleX(0.8191);-webkit-text-stroke:0.2px currentColor;">1.39MB</div>
<div style="position:absolute;left:77px;top:82.5px;width:241px;height:80.5px;background:#fefafd;border-radius:6px 6px 8px 8px;box-shadow:0 1.5px 3.5px rgba(0,0,0,0.2),0 0 1.5px rgba(0,0,0,0.12)"></div>
<svg style="position:absolute;left:88.2px;top:75px;filter:drop-shadow(0 0 0.8px rgba(0,0,0,0.22))" width="18" height="10" viewBox="0 0 18 10"><path d="M0 8 L9 0.4 L18 8 Z" fill="#fefafd"/></svg>
<div style="position:absolute;left:84px;top:82.5px;width:228px;height:6px;background:#fefafd"></div>
<div class="t" style="left:89.50px;top:99.00px;font-size:13px;color:#201f1e;font-weight:400;transform:scaleX(1.0042);-webkit-text-stroke:0.4px currentColor;">ab51a379-7604-4933-8ed7-40...</div>
<div class="t" style="left:89.50px;top:135.00px;font-size:13px;color:#201f1e;font-weight:400;transform:scaleX(0.9829);-webkit-text-stroke:0.4px currentColor;">uc</div>
</body></html>
